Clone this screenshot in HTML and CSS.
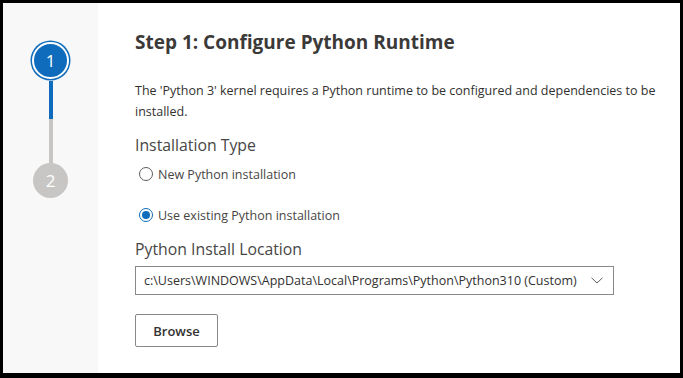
FILE: index.html
```html
<!DOCTYPE html>
<html lang="en">
<head>
    <meta charset="UTF-8">
    <meta name="viewport" content="width=device-width, initial-scale=1.0">
    <title>Configure Python Runtime</title>
    <link rel="stylesheet" href="styles.css">
</head>
<body>
    <div class="frame">
        <div class="steps">
            <div class="step active">1</div>
            <div class="connector">
                <div class="connector-done"></div>
            </div>
            <div class="step">2</div>
        </div>
        <div class="content">
            <h1>Step 1: Configure Python Runtime</h1>
            <p class="intro">The 'Python 3' kernel requires a Python runtime to be configured and dependencies to be installed.</p>
            <h2>Installation Type</h2>
            <label class="radio-row">
                <span class="radio"></span>
                New Python installation
            </label>
            <label class="radio-row second">
                <span class="radio checked"></span>
                Use existing Python installation
            </label>
            <h2 class="location-label">Python Install Location</h2>
            <div class="dropdown">
                <span>c:\Users\WINDOWS\AppData\Local\Programs\Python\Python310 (Custom)</span>
                <svg class="chevron" width="12" height="7" viewBox="0 0 12 7">
                    <path d="M0.5 0.8 L6 6 L11.5 0.8" fill="none" stroke="#605e5c" stroke-width="1"/>
                </svg>
            </div>
            <button class="browse">Browse</button>
        </div>
    </div>
</body>
</html>
```

FILE: styles.css
```css
body {
    margin: 0;
    font-family: "Open Sans", "Noto Sans", sans-serif;
    color: #323130;
}
.frame {
    width: 683px;
    height: 378px;
    box-sizing: border-box;
    border: 3px solid #000;
    border-bottom-width: 5px;
    display: flex;
    background: #fff;
}
.steps {
    width: 95px;
    background: #f8f8f8;
    display: flex;
    flex-direction: column;
    align-items: center;
    padding-top: 39px;
}
.step {
    width: 35px;
    height: 35px;
    border-radius: 50%;
    background: #c8c6c4;
    color: #fff;
    font-size: 17px;
    display: flex;
    align-items: center;
    justify-content: center;
}
.step.active {
    width: 33px;
    height: 33px;
    background: #0f6cbd;
    border: 2px solid #fff;
    box-shadow: 0 0 0 1.5px #0f6cbd;
}
.connector {
    width: 4px;
    height: 84px;
    background: #c8c6c4;
    margin: 2px 0 -2px;
}
.connector-done {
    height: 38px;
    background: #0f6cbd;
}
.content {
    padding: 27px 0 0 37px;
}
h1 {
    margin: 0;
    font-size: 19px;
    line-height: 25px;
    font-weight: 700;
    color: #3b3a39;
}
.intro {
    margin: 25px 0 0;
    width: 540px;
    font-size: 12.5px;
    line-height: 21px;
}
h2 {
    margin: 12px 0 0;
    font-size: 15.8px;
    line-height: 22px;
    font-weight: 400;
    color: #484644;
}
.radio-row {
    display: flex;
    align-items: center;
    gap: 5px;
    height: 20px;
    margin: 8px 0 0 4px;
    font-size: 12.5px;
    color: #484644;
}
.radio-row.second {
    margin-top: 21px;
}
.radio {
    width: 12px;
    height: 12px;
    border: 1px solid #605e5c;
    border-radius: 50%;
    box-sizing: content-box;
    position: relative;
}
.radio.checked {
    border-color: #0f6cbd;
}
.radio.checked::after {
    content: "";
    position: absolute;
    left: 2px;
    top: 2px;
    width: 8px;
    height: 8px;
    border-radius: 50%;
    background: #0f6cbd;
}
.location-label {
    margin-top: 13px;
}
.dropdown {
    margin-top: 6px;
    width: 479px;
    height: 29px;
    box-sizing: border-box;
    border: 1px solid #8a8886;
    display: flex;
    align-items: center;
    justify-content: space-between;
    padding: 0 10px 0 8px;
    font-size: 12.5px;
    color: #323130;
}
.browse {
    margin-top: 19px;
    width: 83px;
    height: 33px;
    border: 1px solid #8a8886;
    border-radius: 2px;
    background: #fff;
    font-family: inherit;
    font-size: 13px;
    font-weight: 600;
    color: #323130;
}
```
